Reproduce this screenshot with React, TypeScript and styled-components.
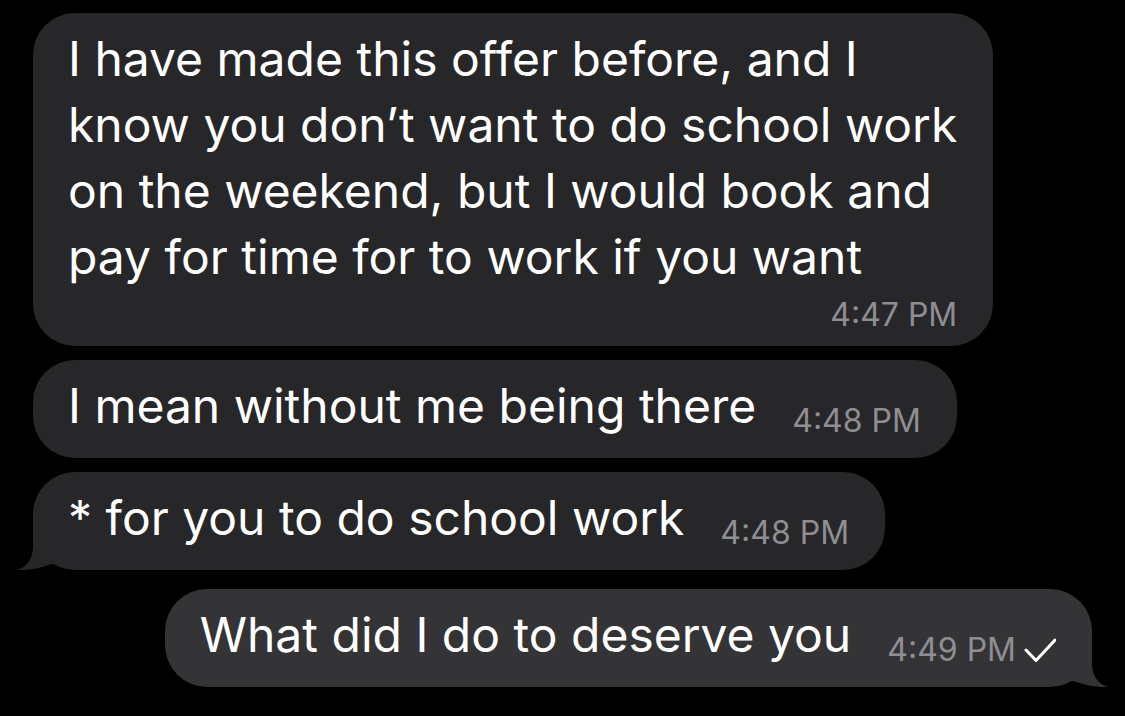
import React from "react";
import styled, { createGlobalStyle } from "styled-components";

const Global = createGlobalStyle`
  html, body { margin: 0; padding: 0; background: #000; }
  body { font-family: Inter, "Noto Sans", "Liberation Sans", sans-serif; -webkit-font-smoothing: antialiased; }
`;

const Thread = styled.div`
  width: 1125px;
  height: 716px;
  box-sizing: border-box;
  padding: 13px 33px 0 33px;
  display: flex;
  flex-direction: column;
  background: #000;
  overflow: hidden;
`;

const Bubble = styled.div<{ $out?: boolean; $gap: number; $stacked?: boolean }>`
  position: relative;
  align-self: ${(p) => (p.$out ? "flex-end" : "flex-start")};
  margin-top: ${(p) => p.$gap}px;
  background: ${(p) => (p.$out ? "#343436" : "#272729")};
  border-radius: 42px;
  box-sizing: border-box;
  padding: ${(p) => (p.$stacked ? "13px 36px 13px 35px" : "13px 36px 19px 35px")};
  display: flex;
  flex-direction: ${(p) => (p.$stacked ? "column" : "row")};
  align-items: flex-end;
  gap: ${(p) => (p.$stacked ? "0" : "36px")};
`;

const Text = styled.div`
  color: #fff;
  font-size: 48px;
  line-height: 66px;
  white-space: nowrap;
  align-self: flex-start;
`;

const Meta = styled.div<{ $stacked?: boolean }>`
  display: flex;
  align-items: center;
  gap: 8px;
  color: #8e8e93;
  font-size: 32px;
  line-height: 40px;
  white-space: nowrap;
  margin-top: ${(p) => (p.$stacked ? "5px" : "0")};
  margin-bottom: -2px;
`;

const Tail = styled.svg<{ $out?: boolean }>`
  position: absolute;
  bottom: 0;
  width: 40px;
  height: 50px;
  ${(p) => (p.$out ? "right: -16px; transform: scaleX(-1);" : "left: -16px;")}
`;

const Check = styled.svg`
  width: 32px;
  height: 24px;
  flex: none;
`;

function BubbleTail({ out, color }: { out?: boolean; color: string }) {
  return (
    <Tail $out={out} viewBox="-16 -50 40 50">
      <path
        d="M0 -50 L0 -24 C0 -11 -6 -3 -16 0 C-6 0.6 6 -1.5 19 -6 L24 -6 L24 -50 Z"
        fill={color}
      />
    </Tail>
  );
}

export default function App() {
  return (
    <>
      <Global />
      <Thread>
        <Bubble $gap={0} $stacked>
          <Text>
            I have made this offer before, and I
            <br />
            know you don’t want to do school work
            <br />
            on the weekend, but I would book and
            <br />
            pay for time for to work if you want
          </Text>
          <Meta $stacked>4:47 PM</Meta>
        </Bubble>
        <Bubble $gap={14}>
          <Text>I mean without me being there</Text>
          <Meta>4:48 PM</Meta>
        </Bubble>
        <Bubble $gap={14}>
          <Text>* for you to do school work</Text>
          <Meta>4:48 PM</Meta>
          <BubbleTail color="#272729" />
        </Bubble>
        <Bubble $gap={19} $out>
          <Text>What did I do to deserve you</Text>
          <Meta>
            4:49 PM
            <Check viewBox="0 0 32 24">
              <path d="M2 12 L12 22.5 L31 2" fill="none" stroke="#fff" strokeWidth="3" strokeLinecap="round" strokeLinejoin="round" />
            </Check>
          </Meta>
          <BubbleTail out color="#343436" />
        </Bubble>
      </Thread>
    </>
  );
}
